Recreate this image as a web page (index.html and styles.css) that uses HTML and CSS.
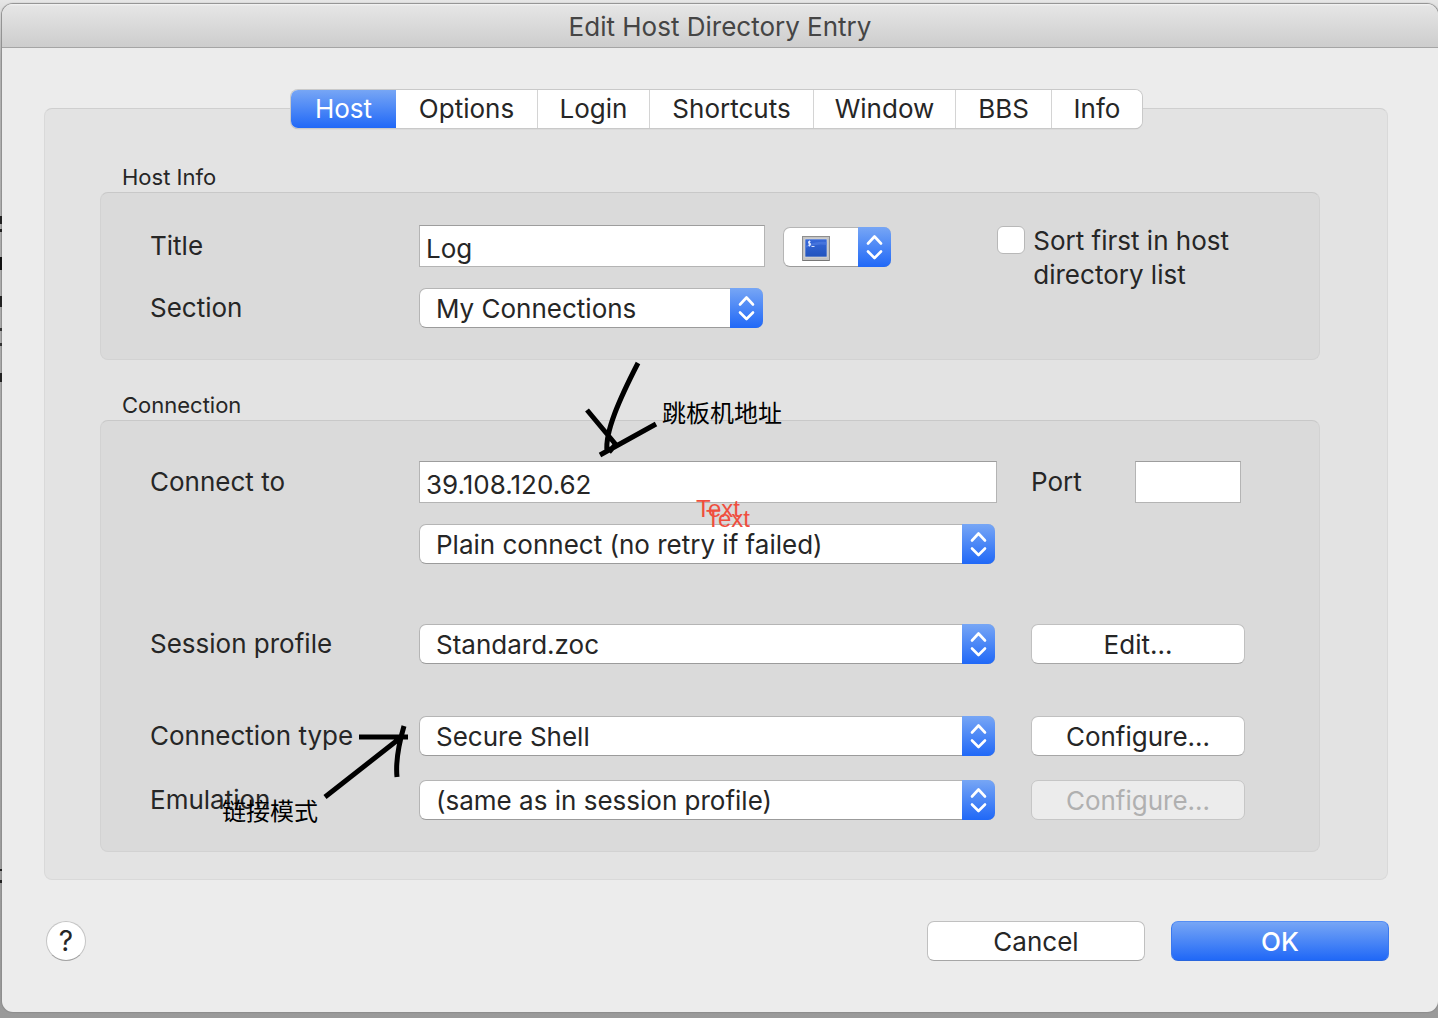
FILE: index.html
```html
<!DOCTYPE html>
<html lang="en">
<head>
<meta charset="utf-8">
<meta name="viewport" content="width=device-width, initial-scale=1">
<title>Edit Host Directory Entry</title>
<link rel="stylesheet" href="styles.css">
</head>
<body>
<svg class="defs" aria-hidden="true">
  <symbol id="stepper" viewBox="0 0 33 40">
    <path d="M10 16.5 16.5 9.500 23 16.5M10 24.500 16.500 31 23 24.500" fill="none" stroke="#fff" stroke-width="2.600" stroke-linecap="round" stroke-linejoin="round"/>
  </symbol>
</svg>
<main class="window">
  <header class="titlebar"><h1>Edit Host Directory Entry</h1></header>
  <form class="content">
    <div class="tabs" role="tablist">
      <button type="button" role="tab" class="tab tab-active" aria-selected="true">Host</button>
      <button type="button" role="tab" class="tab">Options</button>
      <button type="button" role="tab" class="tab">Login</button>
      <button type="button" role="tab" class="tab">Shortcuts</button>
      <button type="button" role="tab" class="tab">Window</button>
      <button type="button" role="tab" class="tab">BBS</button>
      <button type="button" role="tab" class="tab">Info</button>
    </div>
    <section class="panel">
      <h2 class="group-title">Host Info</h2>
      <div class="group host-info">
        <div class="fields">
          <div class="row title-row">
            <label for="title">Title</label>
            <input class="field" id="title" type="text" value="Log">
            <span class="popup icon-popup">
              <select aria-label="Icon"><option></option></select>
              <svg class="terminal" viewBox="0 0 28 26" aria-hidden="true">
                <defs><linearGradient id="screen" x2="0" y2="1"><stop stop-color="#3768da"/><stop offset="1" stop-color="#2254bd"/></linearGradient></defs>
                <rect x=".5" y=".5" width="27" height="24" fill="#c3c3c3" stroke="#8e8e8e"/>
                <path d="M1 24.500h26" stroke="#777"/>
                <rect x="3" y="3" width="22" height="18" fill="url(#screen)" stroke="#e1e1e1" stroke-width=".6"/>
                <path d="M3 10Q14 5 25 6v3Q14 7 3 12z" fill="#5682e4" opacity=".55"/>
                <path d="M8.500 5.500H6.500v1.800h2v1.900H6M7.500 4.500v6M9.500 10.500h3" fill="none" stroke="#e4ecff" stroke-width=".9"/>
              </svg>
              <svg class="stepper" aria-hidden="true"><use href="#stepper"/></svg>
            </span>
          </div>
          <div class="row section-row">
            <label for="section">Section</label>
            <span class="popup">
              <select id="section"><option>My Connections</option></select>
              <svg class="stepper" aria-hidden="true"><use href="#stepper"/></svg>
            </span>
          </div>
        </div>
        <label class="sort"><input type="checkbox"><span>Sort first in host<br>directory list</span></label>
      </div>

      <h2 class="group-title connection-title">Connection</h2>
      <div class="group connection">
        <label for="host">Connect to</label>
        <input class="field" id="host" type="text" value="39.108.120.62">
        <div class="port"><label for="port">Port</label><input class="field" id="port" type="text"></div>

        <span class="popup retry">
          <select aria-label="Retry"><option>Plain connect (no retry if failed)</option></select>
          <svg class="stepper" aria-hidden="true"><use href="#stepper"/></svg>
        </span>

        <label class="profile" for="profile">Session profile</label>
        <span class="popup profile">
          <select id="profile"><option>Standard.zoc</option></select>
          <svg class="stepper" aria-hidden="true"><use href="#stepper"/></svg>
        </span>
        <button type="button" class="button profile">Edit...</button>

        <label class="type" for="type">Connection type</label>
        <span class="popup type">
          <select id="type"><option>Secure Shell</option></select>
          <svg class="stepper" aria-hidden="true"><use href="#stepper"/></svg>
        </span>
        <button type="button" class="button type">Configure...</button>

        <label class="emulation" for="emulation">Emulation</label>
        <span class="popup emulation">
          <select id="emulation"><option>(same as in session profile)</option></select>
          <svg class="stepper" aria-hidden="true"><use href="#stepper"/></svg>
        </span>
        <button type="button" class="button emulation" disabled>Configure...</button>
      </div>
    </section>
    <footer class="actions">
      <button type="button" class="help" aria-label="Help">?</button>
      <button type="button" class="button">Cancel</button>
      <button type="submit" class="button primary">OK</button>
    </footer>
  </form>
</main>

<div class="backdrop-edge" aria-hidden="true"></div>
<svg class="ink" aria-hidden="true">
  <path d="M638 363C619 400 605 432 607 451M609 452 616 444M587 410 617 446M600 455 656 424"/>
  <path d="M359 737H408M325 797 404 735M404 726Q395 757 397 777"/>
</svg>
<span class="note address-note" lang="zh">跳板机地址</span>
<span class="note mode-note" lang="zh">链接模式</span>
<span class="note text-note-back">Text</span>
<span class="note text-note-front">Text</span>
</body>
</html>
```
FILE: styles.css
```css
* { box-sizing: border-box; }

body {
  margin: 0;
  padding: 4px 0 6px 2px;
  background: linear-gradient(#e6e6e6 0, #b5b5b5 60px, #9a9a9a);
  color: #262626;
  font-family: Inter, "Noto Sans", sans-serif;
  font-size: 26px;
  line-height: 34px;
}

h1, h2 { margin: 0; font-weight: 400; }

button, input, select {
  margin: 0;
  color: inherit;
  font: inherit;
}

.defs { position: absolute; width: 0; height: 0; }

.window {
  overflow: hidden;
  border-radius: 11px;
  background: #ececec;
  box-shadow: 0 0 1px 1px #8d8d8d;
}

.titlebar {
  height: 44px;
  border-bottom: 1px solid #a5a5a5;
  background: linear-gradient(#f4f4f4 0, #e5e5e5 2px, #cdcdcd);
  text-align: center;
}
.titlebar h1 {
  padding-top: 6px;
  color: #454545;
  font-size: 26px;
}

.content { padding: 42px 49px 51px 42px; }

/* Tabs straddle the top edge of the panel */
.tabs {
  position: relative;
  display: grid;
  grid-template-columns: 105px 141px 112px 164px 142px 96px 91px;
  width: max-content;
  margin: 0 auto;
  overflow: hidden;
  border-radius: 7px;
  background: #fff;
  box-shadow: 0 0 0 1px #c9c9c9, 0 1px 1px #999;
}
.tab {
  height: 38px;
  padding: 0;
  border: 0;
  border-left: 1px solid #d4d4d4;
  background: #fff;
}
.tab-active {
  border: 0;
  background: linear-gradient(#77a6f5, #2068f7);
  color: #fff;
}
.tab-active + .tab { border-left: 0; }

.panel {
  margin: -20px 1px 0 0;
  padding: 54px 67px 27px 55px;
  border: 1px solid #d9d9d9;
  border-top-color: #cfcfcf;
  border-radius: 8px;
  background: #e3e3e3;
}

.group-title {
  padding: 0 22px;
  font-size: 22px;
  line-height: 29px;
}
.connection-title { margin-top: 31px; }

.group {
  border: 1px solid #d2d2d2;
  border-top-color: #c8c8c8;
  border-radius: 8px;
  background: #dadada;
}

.host-info {
  display: flex;
  justify-content: space-between;
  padding: 32px 90px 31px 49px;
}
.row {
  display: grid;
  grid-template-columns: 269px 344px;
  align-items: center;
}
.title-row { grid-template-columns: 269px 346px 126px; }
.icon-popup { align-self: end; margin-left: 18px; }
.section-row { margin-top: 21px; }

.field {
  width: 100%;
  height: 42px;
  padding: 5px 6px 0;
  border: 1px solid #b4b4b4;
  border-top-color: #9d9d9d;
  border-radius: 0;
  background: #fff;
}

.popup { position: relative; display: block; height: 40px; }
.popup select {
  display: block;
  width: 100%;
  height: 40px;
  padding: 2px 44px 0 16px;
  border: 1px solid #b5b5b5;
  border-bottom-color: #9b9b9b;
  border-radius: 7px;
  background: #fff;
  appearance: none;
}
.stepper {
  position: absolute;
  top: 0;
  right: 0;
  width: 33px;
  height: 40px;
  border-radius: 0 7px 7px 0;
  background: linear-gradient(#77a6f5, #2068f7);
  pointer-events: none;
}
.terminal {
  position: absolute;
  top: 9px;
  left: 19px;
  width: 28px;
  height: 26px;
  pointer-events: none;
}

.sort { display: flex; gap: 8px; margin-top: -1px; }
.sort input {
  width: 28px;
  height: 28px;
  margin-top: 2px;
  border: 1px solid #b8b8b8;
  border-radius: 6px;
  background: #fff;
  appearance: none;
}

.connection {
  display: grid;
  grid-template-columns: 269px 1fr 248px;
  align-items: center;
  padding: 40px 74px 31px 49px;
}
.connection > label { grid-column: 1; }
.connection .field { grid-column: 2; }
.connection .button, .port { margin-left: 34px; }
.connection .popup { grid-column: 2; margin-right: 2px; }
.connection .retry { margin-top: 21px; }
.connection .profile { margin-top: 60px; }
.connection .type { margin-top: 52px; }
.connection .emulation { margin-top: 24px; }
.port {
  display: grid;
  grid-template-columns: 1fr 106px;
  align-items: center;
  padding-right: 4px;
}

.button {
  height: 40px;
  padding: 2px 0 0;
  border: 1px solid #c0c0c0;
  border-bottom-color: #a6a6a6;
  border-radius: 7px;
  background: #fff;
  text-align: center;
}
.button:disabled {
  border-color: #c6c6c6;
  background: #ececec;
  color: #b0b0b0;
}

.actions {
  display: grid;
  grid-template-columns: 40px 1fr 218px 218px;
  column-gap: 26px;
  padding: 41px 0 0 2px;
}
.actions .button { grid-column: 3; }
.actions .primary {
  grid-column: 4;
  border-color: #558ef4 #3b79ee #2865dd;
  background: linear-gradient(#77a6f5, #2068f7);
  color: #fff;
  font-weight: 500;
}
.help {
  width: 40px;
  height: 40px;
  padding: 0;
  border: 1px solid #c4c4c4;
  border-bottom-color: #a3a3a3;
  border-radius: 50%;
  background: #fff;
  font-size: 28px;
}

/* Sliver of the document behind the dialog */
.backdrop-edge {
  position: absolute;
  top: 200px;
  left: 0;
  width: 2px;
  height: 686px;
  background: linear-gradient(
    transparent 16px, #222 16px 24px, transparent 24px 29px, #222 29px 32px,
    transparent 32px 57px, #111 57px 70px, transparent 70px 96px, #222 96px 107px,
    transparent 107px 128px, #333 128px 131px, transparent 131px 143px, #333 143px 146px,
    transparent 146px 173px, #222 173px 182px, transparent 182px 669px, #222 669px 671px,
    transparent 671px 680px, #222 680px 683px, transparent 683px);
}

/* Hand-drawn annotations over the dialog */
.ink {
  position: absolute;
  top: 0;
  left: 0;
  width: 700px;
  height: 820px;
  fill: none;
  stroke: #000;
  stroke-width: 5px;
  pointer-events: none;
}
.note {
  position: absolute;
  color: #000;
  font-family: "Liberation Sans", "Noto Sans CJK SC", sans-serif;
  font-size: 24px;
  line-height: 28px;
  white-space: nowrap;
}
.address-note { top: 400px; left: 662px; }
.mode-note { top: 798px; left: 222px; }
.text-note-back, .text-note-front { color: #f04e3e; }
.text-note-back { top: 495px; left: 696px; }
.text-note-front { top: 505px; left: 706px; }
```
